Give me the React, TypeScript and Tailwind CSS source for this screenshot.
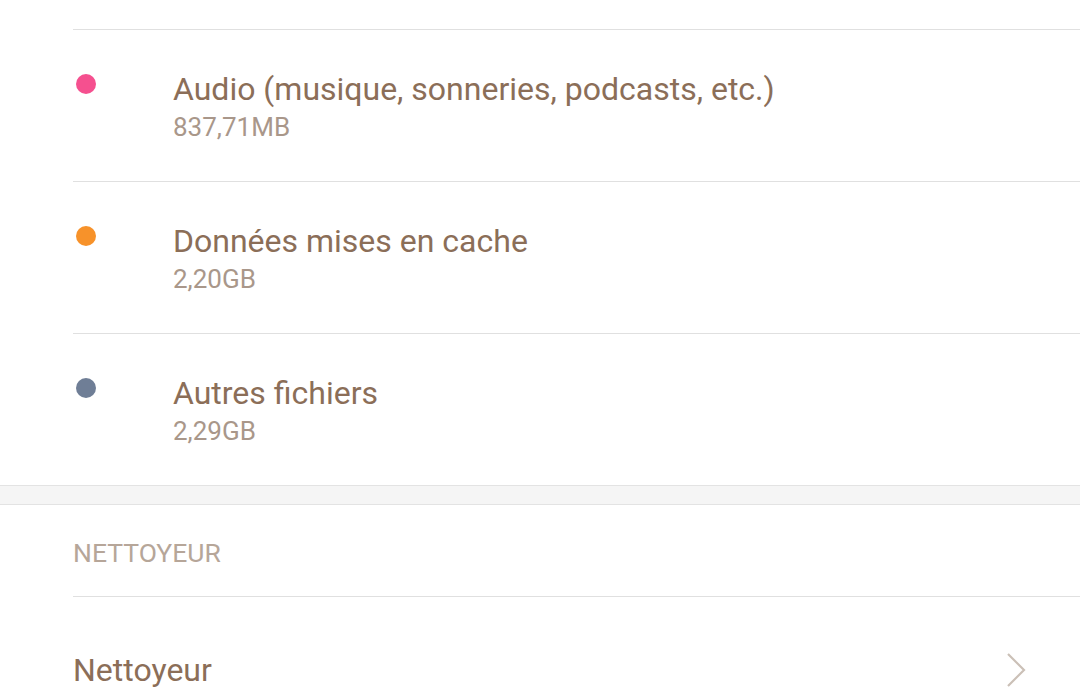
import React from "react";

const ITEMS = [
  { label: "Audio (musique, sonneries, podcasts, etc.)", size: "837,71MB", dot: "bg-[#f5508f]" },
  { label: "Données mises en cache", size: "2,20GB", dot: "bg-[#f7922a]" },
  { label: "Autres fichiers", size: "2,29GB", dot: "bg-[#6f7e96]" },
];

export default function App() {
  return (
    <div
      className="w-[1080px] h-[700px] overflow-hidden bg-white"
      style={{ fontFamily: "Roboto, 'Noto Sans', sans-serif" }}
    >
      {/* Storage breakdown */}
      <div className="pt-[29px] pl-[73px]">
        {ITEMS.map((item) => (
          <div key={item.label} className="h-[152px] border-t border-[#e0e0e0] flex">
            <div className={`w-5 h-5 rounded-full ml-[3px] mt-[44px] ${item.dot}`} />
            <div className="ml-[77px] pt-[41px]">
              <div className="text-[32px] leading-[36px] text-[#8b6e58]">{item.label}</div>
              <div className="text-[26px] leading-[32px] mt-[4px] text-[#a9978a]">{item.size}</div>
            </div>
          </div>
        ))}
      </div>

      {/* Separator band */}
      <div className="h-[20px] bg-[#f5f5f5] border-t border-b border-[#e3e3e3]" />

      {/* Cleaner section */}
      <div className="pl-[73px]">
        <div className="h-[92px] border-b border-[#e0e0e0] pt-[32px] text-[26.5px] leading-[32px] text-[#b6a699]">
          NETTOYEUR
        </div>
        <div className="flex items-center justify-between pr-[54px] h-[146px]">
          <span className="text-[32px] leading-[36px] text-[#8b6e58]">Nettoyeur</span>
          <svg width="20" height="36" viewBox="0 0 20 36" fill="none">
            <path d="M2 2 L18 18 L2 34" stroke="#cbc0b7" strokeWidth="2.2" />
          </svg>
        </div>
      </div>
    </div>
  );
}
